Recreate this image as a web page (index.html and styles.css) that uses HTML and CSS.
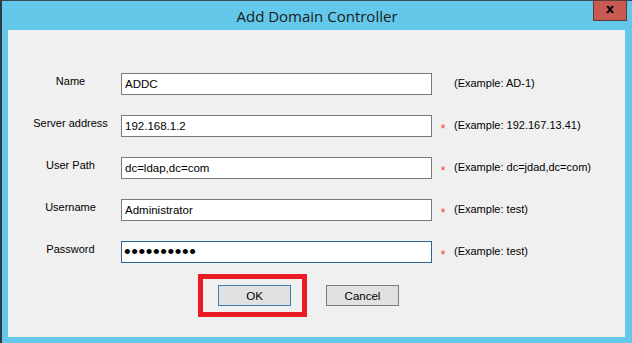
FILE: index.html
```html
<!DOCTYPE html>
<html lang="en">
<head>
    <meta charset="UTF-8">
    <title>Add Domain Controller</title>
    <link rel="stylesheet" href="styles.css">
</head>
<body>

<div class="window">
    <div class="titlebar">
        <span></span>
        <div class="title">Add Domain Controller</div>
        <button class="close-btn">x</button>
    </div>

    <div class="client">
        <div class="form">
            <label class="label">Name</label>
            <input class="field" type="text" value="ADDC">
            <span class="required"></span>
            <span class="hint">(Example: AD-1)</span>

            <label class="label">Server address</label>
            <input class="field" type="text" value="192.168.1.2">
            <span class="required">*</span>
            <span class="hint">(Example: 192.167.13.41)</span>

            <label class="label">User Path</label>
            <input class="field" type="text" value="dc=ldap,dc=com">
            <span class="required">*</span>
            <span class="hint">(Example: dc=jdad,dc=com)</span>

            <label class="label">Username</label>
            <input class="field" type="text" value="Administrator">
            <span class="required">*</span>
            <span class="hint">(Example: test)</span>

            <label class="label">Password</label>
            <input class="field field-focus password" type="password" value="1234567890">
            <span class="required">*</span>
            <span class="hint">(Example: test)</span>
        </div>

        <div class="buttons">
            <div class="highlight">
                <button class="btn btn-default">OK</button>
            </div>
            <button class="btn">Cancel</button>
        </div>
    </div>
</div>

</body>
</html>
```

FILE: styles.css
```css
body {
    margin: 0;
    padding: 0;
    font-family: 'Liberation Sans', Arial, sans-serif;
    font-size: 11px;
    color: #000;
}

.window {
    width: 632px;
    height: 343px;
    box-sizing: border-box;
    display: flex;
    flex-direction: column;
    background-color: #63c8ea;
    border-left: 2px solid #2f3b40;
    border-top: 1px solid #3a4a50;
}

.titlebar {
    height: 29px;
    display: grid;
    grid-template-columns: 1fr auto 1fr;
    align-items: start;
}

.title {
    font-family: 'Open Sans', 'Noto Sans', sans-serif;
    font-size: 15px;
    color: #1b1b1b;
    line-height: 30px;
    margin-left: 0;
}

.close-btn {
    justify-self: end;
    width: 34px;
    height: 21px;
    margin: -1px 5px 0 0;
    padding: 0 0 3px 0;
    background-color: #c75a52;
    border: 1px solid #5f3a36;
    font-family: 'DejaVu Sans', sans-serif;
    font-weight: bold;
    font-size: 13px;
    color: #000;
    line-height: 14px;
}

.client {
    flex: 1;
    margin: 0 7px 6px 6px;
    background-color: #f0f0f0;
    padding: 43px 0 0 12px;
}

.form {
    display: grid;
    grid-template-columns: 101px 311px 22px auto;
    grid-auto-rows: 22px;
    row-gap: 20px;
    align-items: center;
}

.label {
    text-align: center;
    margin-top: -6px;
}

.field {
    box-sizing: border-box;
    width: 311px;
    height: 22px;
    margin: 0;
    border: 1px solid #7a7a7a;
    background: #fff;
    padding: 0 3px;
    font-family: 'Liberation Sans', Arial, sans-serif;
    font-size: 11.5px;
    color: #000;
    outline: none;
}

.field-focus {
    border-color: #2f6496;
}

.password {
    font-size: 19px;
    letter-spacing: 0.6px;
    padding-left: 2px;
}

.required {
    color: #f0412a;
    text-align: center;
    font-size: 12px;
    margin-top: 6px;
}

.hint {
    margin-top: -3px;
}

.buttons {
    display: flex;
    align-items: center;
    margin-top: 11px;
    padding-left: 178px;
}

.highlight {
    border: 5px solid #ed1c24;
    padding: 6px 11px 6px 15px;
}

.btn {
    box-sizing: border-box;
    width: 73px;
    height: 21px;
    margin: 0;
    padding: 0;
    background-color: #e1e1e1;
    border: 1px solid #7a7a7a;
    font-family: 'Liberation Sans', Arial, sans-serif;
    font-size: 11.5px;
    color: #000;
}

.btn-default {
    border-color: #3c7fb1;
}

.highlight + .btn {
    margin-left: 19px;
}
```
